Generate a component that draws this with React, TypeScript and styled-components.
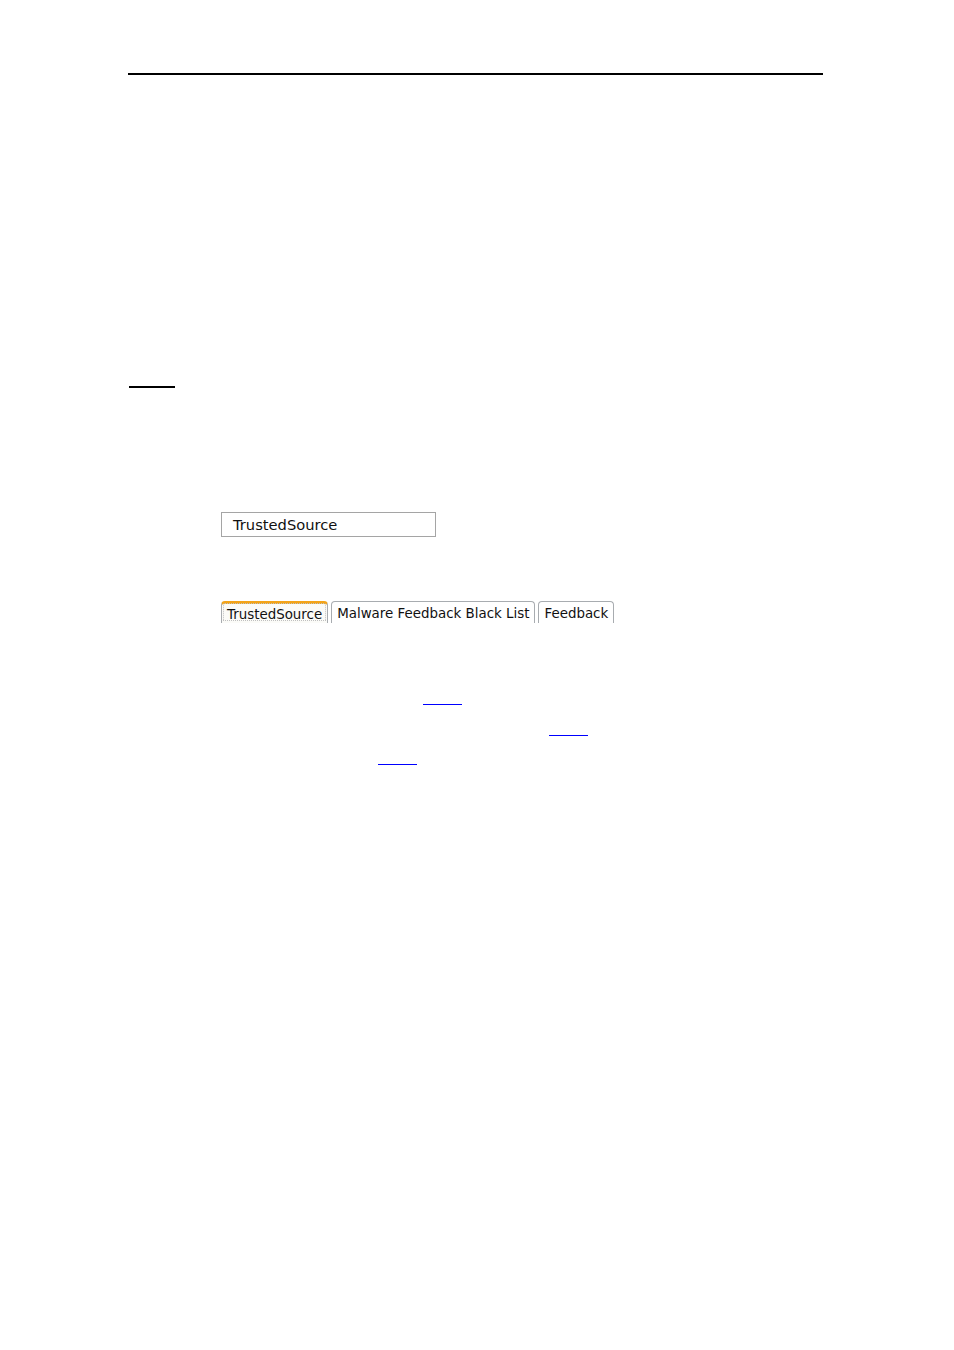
import styled, { createGlobalStyle } from 'styled-components';

const Global = createGlobalStyle`
  html, body {
    margin: 0;
    padding: 0;
    background: #fff;
  }
  body {
    font-family: "DejaVu Sans", Verdana, sans-serif;
  }
`;

const Page = styled.div`
  width: 954px;
  min-height: 1350px;
  padding: 73px 0 0 128px;
  box-sizing: border-box;
`;

const HeaderRule = styled.div`
  width: 695px;
  height: 2px;
  background: #000;
`;

const SectionRule = styled.div`
  width: 46px;
  height: 2px;
  margin-top: 311px;
  margin-left: 1px;
  background: #000;
`;

const Field = styled.div`
  margin: 124px 0 0 93px;
  width: 215px;
  height: 25px;
  box-sizing: border-box;
  border: 1px solid #a5a5a5;
  padding: 3px 0 0 11px;
  font-size: 14.7px;
  color: #111;
`;

const TabBar = styled.div`
  display: flex;
  gap: 3px;
  margin: 64px 0 0 93px;
  height: 22px;
`;

const Tab = styled.div<{ $active?: boolean }>`
  display: flex;
  align-items: center;
  box-sizing: border-box;
  height: 22px;
  padding: 1px 5px 0;
  border: 1px solid #a8acb0;
  border-bottom: none;
  border-radius: 4px 4px 0 0;
  background: ${(p) => (p.$active ? '#fbfbf8' : '#fff')};
  border-top: ${(p) => (p.$active ? '3px solid #f3a41a' : '1px solid #a8acb0')};
  font-size: 13.4px;
  color: #111;
  outline: ${(p) => (p.$active ? '1px dotted #c0c0c0' : 'none')};
  outline-offset: -3px;
`;

const Line = styled.div<{ $top: number; $left: number }>`
  margin-top: ${(p) => p.$top}px;
  padding-left: ${(p) => p.$left}px;
  height: 17px;
`;

const Link = styled.a`
  display: inline-block;
  box-sizing: border-box;
  width: 39px;
  height: 17px;
  line-height: 16px;
  border-bottom: 1px solid #0000ff;
  font-size: 12px;
  color: transparent;
  text-decoration: none;
  vertical-align: top;
`;

export default function App() {
  return (
    <>
      <Global />
      <Page>
        <HeaderRule />
        <SectionRule />
        <Field>TrustedSource</Field>
        <TabBar>
          <Tab $active>TrustedSource</Tab>
          <Tab>Malware Feedback Black List</Tab>
          <Tab>Feedback</Tab>
        </TabBar>
        <Line $top={65} $left={295}>
          <Link href="#">here</Link>
        </Line>
        <Line $top={14} $left={421}>
          <Link href="#">here</Link>
        </Line>
        <Line $top={12} $left={250}>
          <Link href="#">here</Link>
        </Line>
      </Page>
    </>
  );
}
